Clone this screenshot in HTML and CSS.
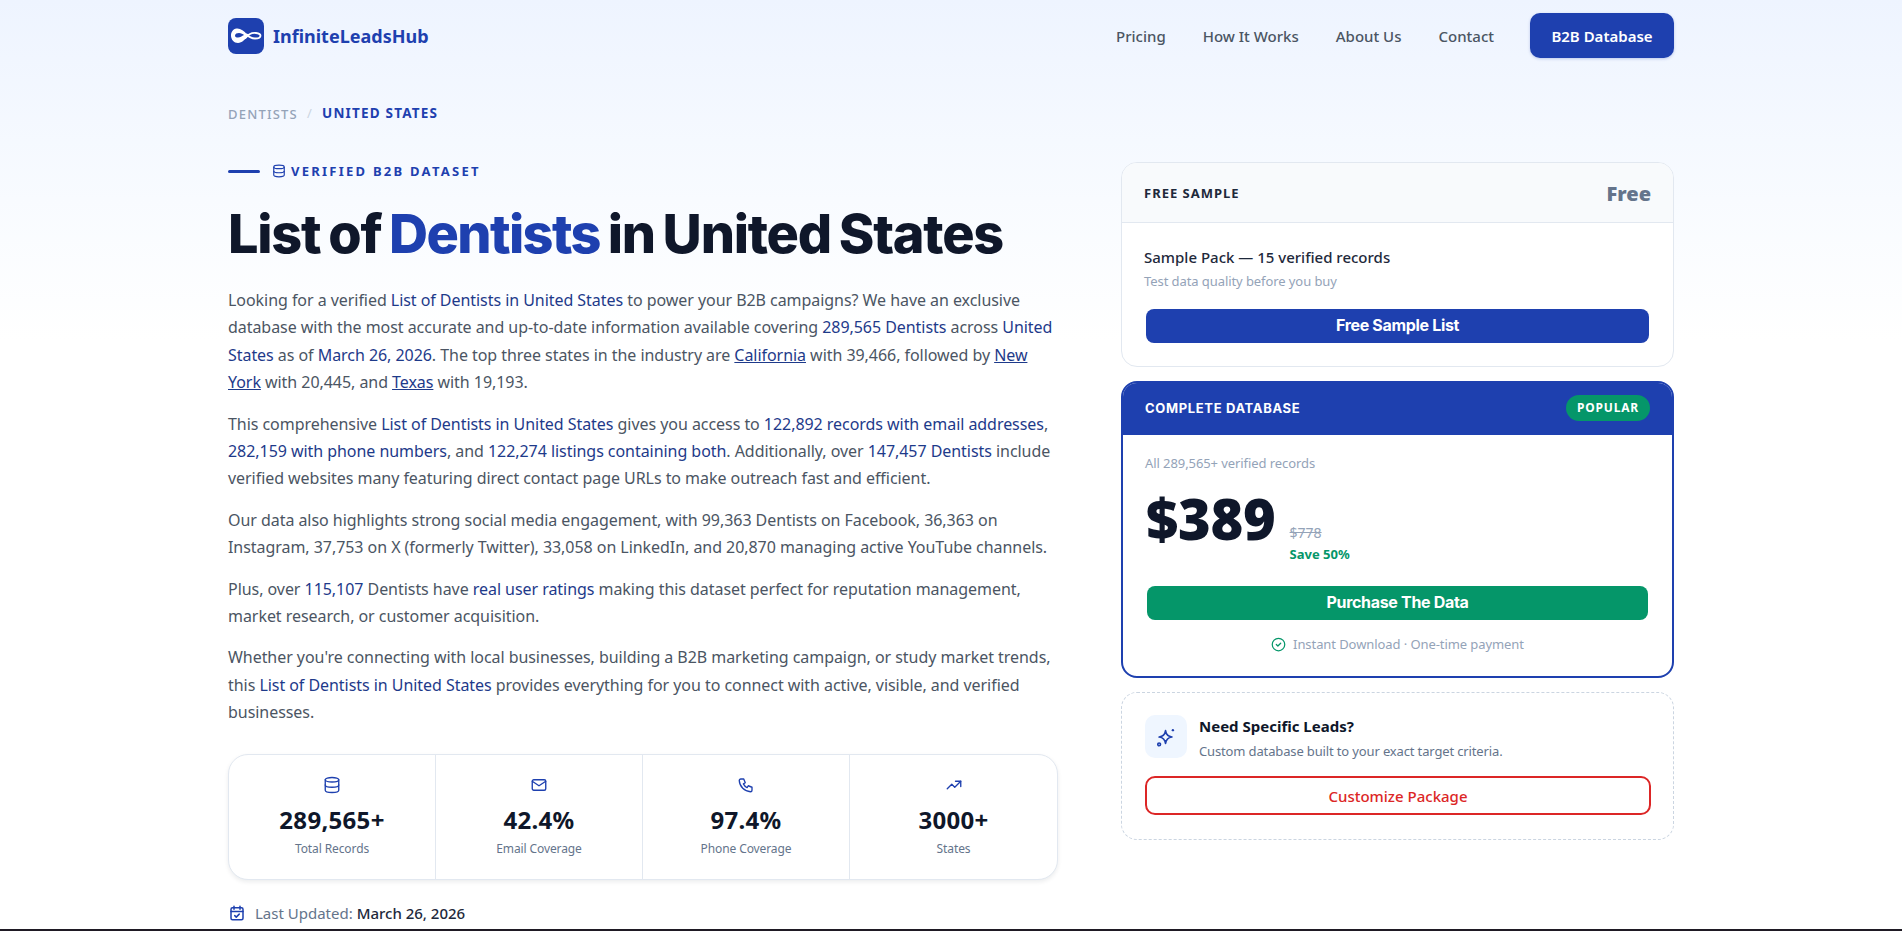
FILE: index.html
```html
<!DOCTYPE html>
<html lang="en">
<head>
  <meta charset="UTF-8" />
  <title>List of Dentists in United States</title>
  <link rel="stylesheet" href="styles.css">
</head>
<body>
  <div class="hero">
    <header class="topbar">
      <a class="brand" href="#">
        <span class="brand-mark">
          <svg viewBox="0 0 36 36" width="36" height="36" fill="none">
            <path d="M17 20.500C20 16.500 24 14.500 28 15c3 .4 4.500 1.400 4.500 2.700 0 1.500-2 2.800-5.500 2.800-3 0-6-1.500-9-4.500" stroke="#fff" stroke-width="1.800"/>
            <path d="M19 16.500C16 12.500 12 10 8.500 10.500 5 11 3 14 3 17.500 3 21.500 6 25 10 25c4 0 7-4 9.500-6z" fill="#fff"/>
            <path d="M7 17.500C7 15.800 9 15 11 15c2 0 4 1 5 2-2 1-4 2.500-6 2.500-2 0-3-.6-3-2z" fill="#1e40af"/>
          </svg>
        </span>
        <span class="brand-name">InfiniteLeadsHub</span>
      </a>
      <nav class="nav">
        <a href="#">Pricing</a>
        <a href="#">How It Works</a>
        <a href="#">About Us</a>
        <a href="#">Contact</a>
        <a class="nav-cta" href="#">B2B Database</a>
      </nav>
    </header>

    <div class="crumbs">
      <a class="crumb-parent" href="#">Dentists</a>
      <span class="crumb-sep">/</span>
      <span class="crumb-current">United States</span>
    </div>

    <main class="layout">
      <section class="intro">
        <div class="eyebrow">
          <span class="eyebrow-line"></span>
          <svg class="eyebrow-icon" viewBox="0 0 24 24"><ellipse cx="12" cy="5" rx="9" ry="3"/><path d="M3 5v14a9 3 0 0 0 18 0V5"/><path d="M3 12a9 3 0 0 0 18 0"/></svg>
          <span>Verified B2B Dataset</span>
        </div>
        <h1>List of <em>Dentists</em> in United States</h1>

        <div class="copy">
          <p>Looking for a verified <a href="#">List of Dentists in United States</a> to power your B2B campaigns? We have an exclusive database with the most accurate and up-to-date information available covering <a href="#">289,565 Dentists</a> across <a href="#">United States</a> as of <a href="#">March 26, 2026</a>. The top three states in the industry are <a class="u" href="#">California</a> with 39,466, followed by <a class="u" href="#">New York</a> with 20,445, and <a class="u" href="#">Texas</a> with 19,193.</p>
          <p>This comprehensive <a href="#">List of Dentists in United States</a> gives you access to <a href="#">122,892 records with email addresses</a>, <a href="#">282,159 with phone numbers</a>, and <a href="#">122,274 listings containing both</a>. Additionally, over <a href="#">147,457 Dentists</a> include verified websites many featuring direct contact page URLs to make outreach fast and efficient.</p>
          <p>Our data also highlights strong social media engagement, with 99,363 Dentists on Facebook, 36,363 on Instagram, 37,753 on X (formerly Twitter), 33,058 on LinkedIn, and 20,870 managing active YouTube channels.</p>
          <p>Plus, over <a href="#">115,107</a> Dentists have <a href="#">real user ratings</a> making this dataset perfect for reputation management, market research, or customer acquisition.</p>
          <p>Whether you're connecting with local businesses, building a B2B marketing campaign, or study market trends, this <a href="#">List of Dentists in United States</a> provides everything for you to connect with active, visible, and verified businesses.</p>
        </div>

        <div class="stats">
          <div class="stat">
            <svg class="stat-icon" viewBox="0 0 24 24"><ellipse cx="12" cy="5" rx="9" ry="3"/><path d="M3 5v14a9 3 0 0 0 18 0V5"/><path d="M3 12a9 3 0 0 0 18 0"/></svg>
            <strong>289,565+</strong>
            <span>Total Records</span>
          </div>
          <div class="stat">
            <svg class="stat-icon" viewBox="0 0 24 24"><rect x="3" y="5" width="18" height="14" rx="2"/><path d="m3 7 9 6 9-6"/></svg>
            <strong>42.4%</strong>
            <span>Email Coverage</span>
          </div>
          <div class="stat">
            <svg class="stat-icon" viewBox="0 0 24 24"><path d="M5 4h4l2 5-2.500 1.500a11 11 0 0 0 5 5L15 13l5 2v4a2 2 0 0 1-2 2A16 16 0 0 1 3 6a2 2 0 0 1 2-2"/></svg>
            <strong>97.4%</strong>
            <span>Phone Coverage</span>
          </div>
          <div class="stat">
            <svg class="stat-icon" viewBox="0 0 24 24"><path d="m3 17 6-6 4 4 8-8"/><path d="M14 7h7v7"/></svg>
            <strong>3000+</strong>
            <span>States</span>
          </div>
        </div>

        <div class="updated">
          <svg class="updated-icon" viewBox="0 0 24 24"><rect x="4" y="5" width="16" height="16" rx="2"/><path d="M16 3v4M8 3v4M4 10h16"/><path d="m9 15.500 2 2 4-4"/></svg>
          <span>Last Updated: <b>March 26, 2026</b></span>
        </div>
      </section>

      <aside class="side">
        <div class="card">
          <div class="card-head">
            <span class="card-label">Free Sample</span>
            <span class="card-free">Free</span>
          </div>
          <div class="card-body">
            <div class="pack-title">Sample Pack — 15 verified records</div>
            <div class="pack-sub">Test data quality before you buy</div>
            <a class="btn btn-blue" href="#">Free Sample List</a>
          </div>
        </div>

        <div class="card card-main">
          <div class="main-head">
            <span class="main-label">Complete Database</span>
            <span class="pill">Popular</span>
          </div>
          <div class="main-body">
            <div class="pack-sub flush">All 289,565+ verified records</div>
            <div class="price-row">
              <span class="price">$389</span>
              <span class="price-side">
                <s>$778</s>
                <b>Save 50%</b>
              </span>
            </div>
            <a class="btn btn-green" href="#">Purchase The Data</a>
            <div class="assure">
              <svg viewBox="0 0 24 24"><circle cx="12" cy="12" r="10"/><path d="m8.500 12 2.500 2.500 4.500-4.500"/></svg>
              <span>Instant Download · One-time payment</span>
            </div>
          </div>
        </div>

        <div class="card card-custom">
          <div class="custom-top">
            <span class="custom-icon">
              <svg viewBox="0 0 24 24"><path d="M11.500 5c.6 4.300 2.700 6.400 7 7-4.300.6-6.400 2.700-7 7-.6-4.300-2.700-6.400-7-7 4.300-.6 6.400-2.700 7-7z"/><circle class="dot" cx="19.500" cy="4.500" r="1.300"/><circle cx="4.500" cy="20" r="1.500"/></svg>
            </span>
            <div>
              <div class="custom-title">Need Specific Leads?</div>
              <div class="custom-sub">Custom database built to your exact target criteria.</div>
            </div>
          </div>
          <a class="btn-outline" href="#">Customize Package</a>
        </div>
      </aside>
    </main>
  </div>
  <footer class="footer"></footer>
</body>
</html>
```

FILE: styles.css
```css
* {
  box-sizing: border-box;
}
body {
  margin: 0;
  font-family: "Noto Sans", sans-serif;
  color: #4b5563;
  background: #fff;
}
a {
  text-decoration: none;
  color: inherit;
}
.hero {
  height: 929px;
  padding: 0 228px;
  background: linear-gradient(180deg, #eef4ff 0, #f8fbff 200px, #fff 340px);
}
.topbar {
  display: flex;
  align-items: center;
  justify-content: space-between;
  height: 71px;
}
.brand {
  display: flex;
  align-items: center;
  gap: 9px;
}
.brand-mark {
  display: flex;
  width: 36px;
  height: 36px;
  border-radius: 8px;
  background: #1e40af;
}
.brand-name {
  font-size: 18px;
  font-weight: 700;
  color: #1e40af;
}
.nav {
  display: flex;
  align-items: center;
  gap: 37px;
  font-size: 15px;
  font-weight: 500;
  color: #4b5563;
}
.nav-cta {
  display: flex;
  align-items: center;
  justify-content: center;
  width: 144px;
  height: 45px;
  margin-left: -1px;
  border-radius: 10px;
  background: #1e40af;
  color: #fff;
  font-weight: 600;
  box-shadow: 0 1px 3px rgba(30, 64, 175, 0.25);
}
.crumbs {
  display: flex;
  align-items: center;
  gap: 9px;
  height: 20px;
  margin-top: 32px;
  font-size: 13px;
  letter-spacing: 1.2px;
  text-transform: uppercase;
}
.crumb-parent {
  color: #94a3b8;
  font-weight: 500;
  padding-top: 2px;
}
.crumb-sep {
  color: #cbd5e1;
}
.crumb-current {
  color: #1e40af;
  font-size: 13.500px;
  font-weight: 700;
}
.layout {
  display: grid;
  grid-template-columns: 830px 553px;
  gap: 63px;
  margin-top: 39px;
  align-items: start;
}
.eyebrow {
  display: flex;
  align-items: center;
  height: 18px;
  font-size: 13px;
  font-weight: 700;
  letter-spacing: 2.250px;
  text-transform: uppercase;
  color: #1e40af;
}
.eyebrow-line {
  width: 32px;
  height: 3px;
  margin-right: 12px;
  background: #1e40af;
  border-radius: 2px;
}
.eyebrow-icon {
  width: 14px;
  height: 14px;
  margin-right: 5px;
  fill: none;
  stroke: currentColor;
  stroke-width: 2;
}
h1 {
  margin: 23px 0 22px;
  font-family: Inter, sans-serif;
  font-size: 54px;
  line-height: 62px;
  font-weight: 800;
  letter-spacing: -0.023em;
  word-spacing: -2.800px;
  color: #0f172a;
}
h1 em {
  font-style: normal;
  letter-spacing: -0.03em;
  color: #1e40af;
}
.copy p {
  margin: 0 0 14px;
  font-size: 16px;
  line-height: 27.4px;
  letter-spacing: -0.05px;
  color: #4b5563;
}
.copy p:last-child {
  margin-bottom: 0;
}
.copy a {
  color: #1e3a8a;
}
.copy a.u {
  text-decoration: underline;
}
.stats {
  display: grid;
  grid-template-columns: repeat(4, 1fr);
  height: 126px;
  margin-top: 27px;
  border: 1px solid #e2e8f0;
  border-radius: 20px;
  background: #fff;
  box-shadow: 0 2px 4px rgba(15, 23, 42, 0.08);
}
.stat {
  display: flex;
  flex-direction: column;
  align-items: center;
  padding-top: 21px;
  border-right: 1px solid #e2e8f0;
}
.stat:last-child {
  border-right: none;
}
.stat-icon {
  width: 18px;
  height: 18px;
  fill: none;
  stroke: #1e40af;
  stroke-width: 1.800;
  stroke-linecap: round;
  stroke-linejoin: round;
}
.stat strong {
  margin-top: 9px;
  font-size: 24px;
  line-height: 34px;
  font-weight: 700;
  letter-spacing: 0.3px;
  color: #0f172a;
}
.stat span {
  margin-top: 3px;
  font-size: 12px;
  line-height: 18px;
  letter-spacing: -0.1px;
  color: #64748b;
}
.updated {
  display: flex;
  align-items: center;
  gap: 9px;
  height: 20px;
  margin-top: 23px;
  font-size: 15px;
  color: #64748b;
}
.updated b {
  font-weight: 500;
  color: #1e293b;
}
.updated-icon {
  width: 18px;
  height: 18px;
  fill: none;
  stroke: #1e40af;
  stroke-width: 2;
  stroke-linecap: round;
  stroke-linejoin: round;
}
.side {
  display: flex;
  flex-direction: column;
  gap: 14px;
}
.card {
  border: 1px solid #e2e8f0;
  border-radius: 16px;
  background: #fff;
  overflow: hidden;
}
.card-head {
  display: flex;
  align-items: center;
  justify-content: space-between;
  height: 60px;
  padding: 0 22px;
  border-bottom: 1px solid #e2e8f0;
  background: #f8fafc;
}
.card-label {
  font-size: 13px;
  font-weight: 700;
  letter-spacing: 1px;
  text-transform: uppercase;
  color: #1e293b;
}
.card-free {
  padding-top: 2px;
  font-size: 20px;
  font-weight: 900;
  color: #64748b;
}
.card-body {
  padding: 23px 22px 23px;
}
.pack-title {
  font-size: 15px;
  line-height: 22px;
  font-weight: 500;
  color: #1e293b;
}
.pack-sub {
  margin-top: 3px;
  font-size: 13px;
  line-height: 20px;
  letter-spacing: -0.08px;
  color: #94a3b8;
}
.pack-sub.flush {
  margin-top: 0;
}
.btn {
  display: flex;
  align-items: center;
  justify-content: center;
  padding-bottom: 2px;
  border-radius: 8px;
  font-family: Inter, sans-serif;
  font-size: 16px;
  font-weight: 700;
  letter-spacing: -0.02em;
  color: #fff;
}
.btn-blue {
  height: 34px;
  margin: 18px 2px 0;
  background: #1e40af;
}
.btn-green {
  height: 34px;
  margin: 21px 2px 0;
  background: #059669;
}
.card-main {
  height: 297px;
  border: 2px solid #1e40af;
}
.main-head {
  display: flex;
  align-items: center;
  justify-content: space-between;
  height: 52px;
  padding: 0 22px 2px;
  background: #1e40af;
}
.main-label {
  font-family: Inter, sans-serif;
  font-size: 13px;
  font-weight: 700;
  letter-spacing: 0.65px;
  text-transform: uppercase;
  color: #fff;
}
.pill {
  padding: 0 11px;
  height: 26px;
  line-height: 26px;
  border-radius: 13px;
  background: #059669;
  font-size: 12px;
  font-weight: 700;
  letter-spacing: 0.8px;
  text-transform: uppercase;
  color: #fff;
}
.main-body {
  padding: 18px 22px 0;
}
.price-row {
  display: flex;
  align-items: flex-start;
  gap: 14px;
  margin-top: 9px;
  padding-left: 1px;
}
.price {
  font-size: 56px;
  line-height: 72px;
  font-weight: 900;
  letter-spacing: -0.3px;
  color: #0f172a;
}
.price-side {
  display: flex;
  flex-direction: column;
  padding-top: 41px;
  font-size: 13px;
}
.price-side s {
  font-size: 14px;
  line-height: 20px;
  color: #94a3b8;
}
.price-side b {
  line-height: 22px;
  color: #059669;
}
.assure {
  display: flex;
  align-items: center;
  justify-content: center;
  gap: 7px;
  margin-top: 14px;
  font-size: 13px;
  line-height: 20px;
  letter-spacing: -0.08px;
  color: #94a3b8;
}
.assure svg {
  width: 15px;
  height: 15px;
  fill: none;
  stroke: #059669;
  stroke-width: 2;
  stroke-linecap: round;
  stroke-linejoin: round;
}
.card-custom {
  height: 148px;
  padding: 21px 22px 0 23px;
  border: 1px dashed #cbd5e1;
}
.custom-top {
  display: flex;
  gap: 12px;
}
.custom-icon {
  display: flex;
  align-items: center;
  justify-content: center;
  width: 42px;
  height: 43px;
  margin-top: 1px;
  border-radius: 10px;
  background: #eff6ff;
}
.custom-icon svg {
  width: 22px;
  height: 22px;
  fill: none;
  stroke: #1e40af;
  stroke-width: 1.800;
  stroke-linecap: round;
  stroke-linejoin: round;
}
.custom-icon .dot {
  fill: #1e40af;
  stroke: none;
}
.custom-title {
  margin-top: 1px;
  font-size: 15px;
  line-height: 22px;
  font-weight: 700;
  color: #0f172a;
}
.custom-sub {
  margin-top: 5px;
  font-size: 13px;
  line-height: 18px;
  letter-spacing: -0.14px;
  color: #64748b;
}
.btn-outline {
  display: flex;
  align-items: center;
  justify-content: center;
  height: 39px;
  margin-top: 16px;
  border: 2px solid #dc2626;
  border-radius: 10px;
  font-size: 15px;
  font-weight: 500;
  color: #dc2626;
}
.footer {
  height: 2px;
  background: #1f1a24;
}
```
